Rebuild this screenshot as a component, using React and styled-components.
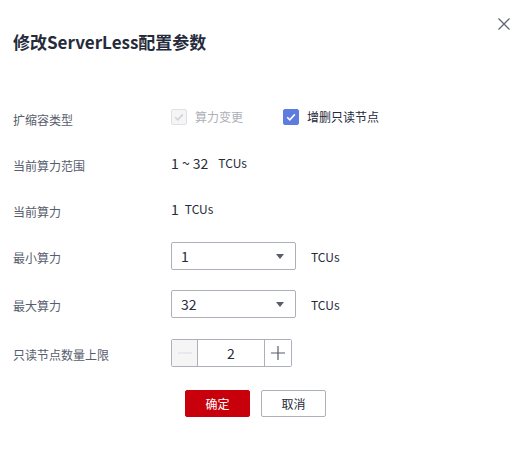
import React, { useState } from 'react';
import styled, { createGlobalStyle } from 'styled-components';

const GlobalStyle = createGlobalStyle`
  body {
    margin: 0;
    background: #ffffff;
    font-family: "Noto Sans CJK SC", "Noto Sans", sans-serif;
  }
`;

const Dialog = styled.div`
  position: relative;
  width: 523px;
  height: 450px;
  box-sizing: border-box;
  padding: 30px 13px 0;
  background: #fff;
`;

const Title = styled.h2`
  margin: 0;
  font-size: 17px;
  line-height: 24px;
  font-weight: 700;
  color: #252b3a;
`;

const CloseButton = styled.button`
  position: absolute;
  top: 17px;
  right: 12px;
  width: 14px;
  height: 14px;
  padding: 0;
  border: none;
  background: transparent;
  display: flex;
  cursor: pointer;
`;

const Form = styled.div`
  margin-top: 50px;
  display: flex;
  flex-direction: column;
`;

const Row = styled.div`
  display: flex;
  align-items: center;
  height: 28px;
  margin-top: ${p => p.$gap || 0}px;
`;

const Label = styled.div`
  width: 158px;
  flex-shrink: 0;
  font-size: 12px;
  line-height: 18px;
  color: #575d6c;
  padding-top: 3px;
`;

const Value = styled.div`
  display: flex;
  align-items: center;
  font-size: 14px;
  line-height: 20px;
  color: #252b3a;
  margin-top: -3px;
`;

const Unit = styled.span`
  font-size: 12px;
  color: #252b3a;
  margin-left: ${p => p.$gap}px;
`;

const CheckGroup = styled.label`
  display: flex;
  align-items: center;
  gap: 8px;
  margin-right: 40px;
  font-size: 12px;
  line-height: 18px;
  color: ${p => (p.$disabled ? '#adb0b8' : '#252b3a')};
`;

const Box = styled.span`
  width: 16px;
  height: 16px;
  box-sizing: border-box;
  border-radius: 2px;
  display: flex;
  align-items: center;
  justify-content: center;
  border: 1px solid ${p => (p.$disabled ? '#dfe1e6' : '#5e7ce0')};
  background: ${p => (p.$disabled ? '#f5f5f6' : '#5e7ce0')};
`;

const Select = styled.div`
  width: 125px;
  height: 28px;
  box-sizing: border-box;
  border: 1px solid #adb0b8;
  border-radius: 2px;
  padding: 0 11px 0 9px;
  display: flex;
  align-items: center;
  justify-content: space-between;
  font-size: 14px;
  color: #252b3a;
`;

const Stepper = styled.div`
  display: flex;
  height: 28px;
  box-sizing: border-box;
  border: 1px solid #adb0b8;
  border-radius: 2px;
`;

const StepButton = styled.button`
  width: ${p => p.$w}px;
  padding: 0;
  border: none;
  border-${p => p.$side}: 1px solid #adb0b8;
  background: ${p => (p.$disabled ? '#f5f5f6' : '#fff')};
  display: flex;
  align-items: center;
  justify-content: center;
  cursor: ${p => (p.$disabled ? 'not-allowed' : 'pointer')};
`;

const StepInput = styled.div`
  width: 66px;
  display: flex;
  align-items: center;
  justify-content: center;
  font-size: 14px;
  color: #252b3a;
`;

const Footer = styled.div`
  display: flex;
  gap: 11px;
  margin-top: 23px;
  padding-left: 172px;
`;

const Button = styled.button`
  width: 65px;
  height: 27px;
  box-sizing: border-box;
  border-radius: 2px;
  font-family: inherit;
  font-size: 12px;
  border: 1px solid ${p => (p.$primary ? '#c7000b' : '#adb0b8')};
  background: ${p => (p.$primary ? '#c7000b' : '#fff')};
  color: ${p => (p.$primary ? '#fff' : '#252b3a')};
  cursor: pointer;
`;

const Check = ({ color }) => (
  <svg width="12" height="12" viewBox="0 0 12 12">
    <path d="M2.2 6.2l2.6 2.6 5-5.4" fill="none" stroke={color} strokeWidth="1.6" />
  </svg>
);

const Arrow = () => (
  <svg width="8" height="5" viewBox="0 0 8 5">
    <path d="M0 0h8L4 5z" fill="#575d6c" />
  </svg>
);

const App = () => {
  const [count, setCount] = useState(2);

  return (
    <>
      <GlobalStyle />
      <Dialog>
        <Title>修改ServerLess配置参数</Title>
        <CloseButton aria-label="close">
          <svg width="14" height="14" viewBox="0 0 14 14">
            <path d="M1.5 1.5l11 11M12.5 1.5l-11 11" stroke="#575d6c" strokeWidth="1.1" />
          </svg>
        </CloseButton>

        <Form>
          <Row>
            <Label>扩缩容类型</Label>
            <Value>
              <CheckGroup $disabled>
                <Box $disabled><Check color="#cfd2d8" /></Box>
                算力变更
              </CheckGroup>
              <CheckGroup>
                <Box><Check color="#fff" /></Box>
                增删只读节点
              </CheckGroup>
            </Value>
          </Row>

          <Row $gap={18}>
            <Label>当前算力范围</Label>
            <Value>
              1 ~ 32<Unit $gap={10}>TCUs</Unit>
            </Value>
          </Row>

          <Row $gap={18}>
            <Label>当前算力</Label>
            <Value>
              1<Unit $gap={6}>TCUs</Unit>
            </Value>
          </Row>

          <Row $gap={18}>
            <Label>最小算力</Label>
            <Select>1<Arrow /></Select>
            <Unit $gap={15}>TCUs</Unit>
          </Row>

          <Row $gap={20}>
            <Label>最大算力</Label>
            <Select>32<Arrow /></Select>
            <Unit $gap={15}>TCUs</Unit>
          </Row>

          <Row $gap={21}>
            <Label>只读节点数量上限</Label>
            <Stepper>
              <StepButton $w={26} $side="right" $disabled={count <= 2} onClick={() => count > 2 && setCount(count - 1)}>
                <svg width="14" height="14" viewBox="0 0 14 14">
                  <path d="M0 7h14" stroke="#dfe1e6" strokeWidth="1.2" />
                </svg>
              </StepButton>
              <StepInput>{count}</StepInput>
              <StepButton $w={27} $side="left" onClick={() => setCount(count + 1)}>
                <svg width="14" height="14" viewBox="0 0 14 14">
                  <path d="M0 7h14M7 0v14" stroke="#575d6c" strokeWidth="1.2" />
                </svg>
              </StepButton>
            </Stepper>
          </Row>
        </Form>

        <Footer>
          <Button $primary>确定</Button>
          <Button>取消</Button>
        </Footer>
      </Dialog>
    </>
  );
};

export default App;
